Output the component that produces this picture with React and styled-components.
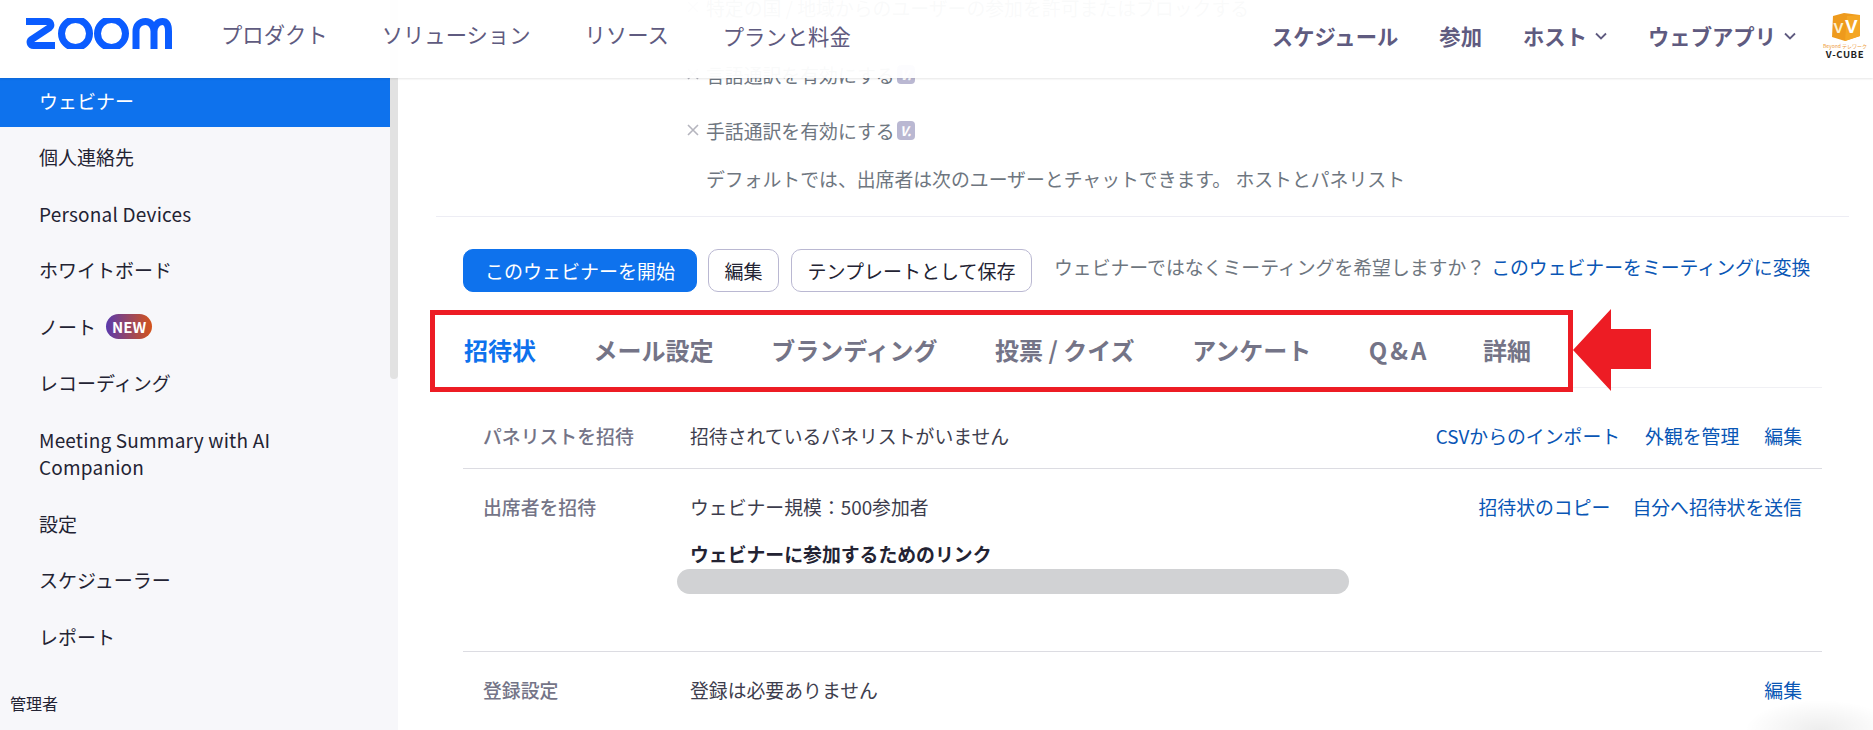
import React from "react";
import styled, { createGlobalStyle } from "styled-components";

const GlobalStyle = createGlobalStyle`
  html, body {
    margin: 0;
    padding: 0;
    background: #fff;
    font-family: "Noto Sans CJK JP", "Noto Sans", sans-serif;
  }
`;

const Page = styled.div`
  position: relative;
  display: flex;
  width: 1873px;
  height: 730px;
  overflow: hidden;
`;

/* header */
const Header = styled.header`
  position: absolute;
  top: 0;
  left: 0;
  right: 0;
  z-index: 5;
  height: 78px;
  display: flex;
  align-items: center;
  background: rgba(255, 255, 255, 0.96);
  box-shadow: 0 1px 2px rgba(0, 0, 0, 0.1);
`;

const LogoBox = styled.div`
  display: flex;
  margin-left: 25px;
  margin-top: -11px;
`;

const NavLeft = styled.nav`
  display: flex;
  align-items: flex-start;
  margin-left: 49px;
  gap: 54px;
  margin-top: -9px;
`;

const NavRight = styled.nav`
  display: flex;
  align-items: center;
  margin-left: auto;
  gap: 41px;
  margin-top: -7px;
`;

const NavItem = styled.a`
  display: flex;
  align-items: center;
  gap: 8px;
  margin-top: ${(p) => p.$nudge || 0}px;
  font-size: 21.33px;
  line-height: 30px;
  color: #5f5b80;
  font-weight: ${(p) => (p.$bold ? 700 : 400)};
`;

const CubeBox = styled.div`
  display: flex;
  flex-direction: column;
  align-items: center;
  width: 44px;
  margin: -7px 6px 0 27px;
`;

const CubeTag = styled.span`
  font-size: 5px;
  line-height: 7px;
  margin-top: 1px;
  color: #ee9a3a;
  white-space: nowrap;
`;

const CubeName = styled.span`
  font-size: 9.5px;
  line-height: 10px;
  font-weight: 700;
  letter-spacing: 0.6px;
  color: #222;
  white-space: nowrap;
`;

/* sidebar */
const Sidebar = styled.aside`
  position: relative;
  flex: none;
  box-sizing: border-box;
  width: 398px;
  height: 730px;
  padding-top: 78px;
  background: #f7f7fa;
  display: flex;
  flex-direction: column;
  gap: 7.6px;
`;

const ScrollThumb = styled.div`
  position: absolute;
  top: 0;
  right: 0;
  width: 8px;
  height: 379px;
  border-radius: 0 0 4px 4px;
  background: #e2e2e2;
`;

const SideItem = styled.a`
  display: flex;
  align-items: center;
  gap: 10px;
  width: 390px;
  box-sizing: border-box;
  padding: 8.6px 100px 13.4px 39px;
  font-size: 19px;
  line-height: 27px;
  letter-spacing: ${(p) => (p.$latin ? "0.2px" : "0")};
  color: ${(p) => (p.$active ? "#fff" : "#232333")};
  background: ${(p) => (p.$active ? "#0e72ed" : "transparent")};
`;

const NewBadge = styled.span`
  font-size: 15px;
  line-height: 25px;
  font-weight: 700;
  color: #fff;
  padding: 0 6px;
  border-radius: 13px;
  background: linear-gradient(90deg, #5a3aad, #d4531a);
`;

const SideHeading = styled.div`
  margin-top: 20px;
  padding-left: 10px;
  font-size: 16px;
  line-height: 24px;
  color: #232333;
`;

/* main */
const Main = styled.main`
  position: relative;
  flex: 1;
  min-width: 0;
  padding-left: 38px;
`;

const Notices = styled.div`
  width: 1413px;
  box-sizing: border-box;
  margin-top: -6.4px;
  padding: 0 0 24px 250px;
  border-bottom: 1px solid #ededf4;
`;

const Notice = styled.div`
  display: flex;
  align-items: center;
  gap: 6px;
  margin-bottom: ${(p) => p.$after}px;
  padding-left: ${(p) => (p.$plain ? 20 : 0)}px;
  font-size: 18.85px;
  line-height: 27px;
  color: #6e7680;
`;

const Cross = styled.svg`
  flex: none;
  width: 14px;
  height: 14px;
  stroke: #b5b5be;
  stroke-width: 1.6;
`;

const VBadge = styled.span`
  display: inline-flex;
  align-items: center;
  justify-content: center;
  width: 18px;
  height: 19px;
  margin-left: -4px;
  border-radius: 4px;
  background: #bab8d2;
  color: #fff;
  font-size: 13px;
  font-weight: 700;
  font-style: italic;
`;

const Inner = styled.div`
  width: 1359px;
  margin-left: 27px;
`;

const Toolbar = styled.div`
  display: flex;
  align-items: center;
  margin-top: 32px;
  height: 43px;
`;

const Button = styled.button`
  box-sizing: border-box;
  height: 43px;
  padding: 0;
  width: ${(p) => p.$w}px;
  margin-right: ${(p) => p.$mr}px;
  border-radius: 10px;
  border: 1px solid ${(p) => (p.$primary ? "#0e72ed" : "#bab8d2")};
  background: ${(p) => (p.$primary ? "#0e72ed" : "#fff")};
  color: ${(p) => (p.$primary ? "#fff" : "#232333")};
  font-family: inherit;
  font-size: 19px;
  white-space: nowrap;
`;

const HintLine = styled.div`
  display: flex;
  gap: 6px;
  padding-bottom: 8px;
`;

const Hint = styled.span`
  font-size: 18.85px;
  line-height: 27px;
  color: #6e7680;
  white-space: nowrap;
`;

const Link = styled.a`
  font-size: 18.85px;
  line-height: 27px;
  color: #0956b5;
  white-space: nowrap;
`;

const Tabs = styled.div`
  display: flex;
  gap: 57.6px;
  height: 75px;
  margin-top: 20px;
  padding-left: 1px;
  align-items: center;
  border-bottom: 1px solid #f0f0f4;
`;

const Tab = styled.a`
  font-size: 24px;
  line-height: 34px;
  font-weight: 700;
  white-space: nowrap;
  letter-spacing: ${(p) => p.$spacing || 0}px;
  margin-right: ${(p) => (p.$spacing ? -4 : 0)}px;
  color: ${(p) => (p.$active ? "#0e72ed" : "#747487")};
`;

const Row = styled.section`
  display: grid;
  grid-template-columns: 207px 1fr auto;
  box-sizing: border-box;
  height: ${(p) => p.$h}px;
  padding: ${(p) => p.$top}px 20px 0 20px;
  border-bottom: ${(p) => (p.$last ? "none" : "1px solid #dcdce2")};
`;

const RowLabel = styled.div`
  font-size: 18.85px;
  line-height: 27px;
  font-weight: 500;
  color: #747487;
`;

const RowValue = styled.div`
  font-size: 18.85px;
  line-height: 27px;
  color: #3d3d4d;
`;

const RowActions = styled.div`
  display: flex;
  gap: ${(p) => p.$gap || 0}px;
`;

const LinkTitle = styled.div`
  margin-top: 20px;
  font-size: 18.85px;
  line-height: 27px;
  font-weight: 700;
  color: #232333;
`;

const Redacted = styled.div`
  width: 672px;
  height: 25px;
  margin: 2px 0 0 -13px;
  border-radius: 13px;
  background: #d1d2d4;
`;

/* annotation over the tabs */
const RedBox = styled.div`
  position: absolute;
  z-index: 3;
  left: 32px;
  top: 310px;
  width: 1143px;
  height: 82px;
  box-sizing: border-box;
  border: 5px solid #ed1c24;
`;

const RedArrow = styled.svg`
  position: absolute;
  z-index: 3;
  left: 1175px;
  top: 309px;
`;

const CornerGlow = styled.div`
  position: absolute;
  right: -22px;
  bottom: -30px;
  width: 150px;
  height: 60px;
  border-radius: 50%;
  background: radial-gradient(closest-side, rgba(0, 0, 0, 0.07), rgba(0, 0, 0, 0));
`;

const ZoomLogo = () => (
  <svg width="147" height="31" viewBox="0 0 147 31" fill="none" stroke="#0b5cff" strokeWidth="7">
    <path d="M1 3.5H22.5C25.5 3.5 27 7.5 24.5 9.6L6.5 21.5C4 23.5 5 27.5 8.5 27.5H30" />
    <circle cx="50.5" cy="15.5" r="14" />
    <circle cx="86.5" cy="15.5" r="14" />
    <path d="M111 31V13.5C111 7.5 115 3.5 120.5 3.5C125.5 3.5 129 8 129 13.5V31M129 13.5C129 8 132.5 3.5 137.5 3.5C142.5 3.5 143.5 8 143.5 13.5V31" />
  </svg>
);

const CubeIcon = () => (
  <svg width="30" height="28" viewBox="0 0 30 28">
    <path d="M3 3L14 0L30 2V23L15 28L2 24Z" fill="#ee9a1c" />
    <path d="M17 3L30 2V23L15 28Z" fill="#f4a623" />
    <text x="3.5" y="20" fontFamily="Liberation Sans" fontSize="15" fontWeight="700" fill="#fdf0cf">V</text>
    <text x="15" y="20" fontFamily="Liberation Sans" fontSize="19" fontWeight="700" fill="#fff">V</text>
  </svg>
);

const Chevron = () => (
  <svg width="12" height="8" viewBox="0 0 12 8" fill="none" stroke="#5f5b80" strokeWidth="1.8">
    <path d="M1 1.5L6 6.5L11 1.5" />
  </svg>
);

const CrossIcon = () => (
  <Cross viewBox="0 0 14 14" fill="none">
    <path d="M2 2L12 12M12 2L2 12" />
  </Cross>
);

const App = () => {
  return (
    <Page>
      <GlobalStyle />
      <Header>
        <LogoBox>
          <ZoomLogo />
        </LogoBox>
        <NavLeft>
          <NavItem>プロダクト</NavItem>
          <NavItem>ソリューション</NavItem>
          <NavItem>リソース</NavItem>
          <NavItem $nudge={2}>プランと料金</NavItem>
        </NavLeft>
        <NavRight>
          <NavItem $bold>スケジュール</NavItem>
          <NavItem $bold>参加</NavItem>
          <NavItem $bold>
            ホスト
            <Chevron />
          </NavItem>
          <NavItem $bold>
            ウェブアプリ
            <Chevron />
          </NavItem>
        </NavRight>
        <CubeBox>
          <CubeIcon />
          <CubeTag>Beyond テレワーク</CubeTag>
          <CubeName>V-CUBE</CubeName>
        </CubeBox>
      </Header>

      <Sidebar>
        <ScrollThumb />
        <SideItem $active>ウェビナー</SideItem>
        <SideItem>個人連絡先</SideItem>
        <SideItem $latin>Personal Devices</SideItem>
        <SideItem>ホワイトボード</SideItem>
        <SideItem>
          ノート
          <NewBadge>NEW</NewBadge>
        </SideItem>
        <SideItem>レコーディング</SideItem>
        <SideItem $latin>Meeting Summary with AI Companion</SideItem>
        <SideItem>設定</SideItem>
        <SideItem>スケジューラー</SideItem>
        <SideItem>レポート</SideItem>
        <SideHeading>管理者</SideHeading>
      </Sidebar>

      <Main>
        <Notices>
          <Notice $after={40}>
            <CrossIcon />
            特定の国 / 地域からのユーザーの参加を許可またはブロックする
          </Notice>
          <Notice $after={29}>
            <CrossIcon />
            言語通訳を有効にする
            <VBadge>V.</VBadge>
          </Notice>
          <Notice $after={21.4}>
            <CrossIcon />
            手話通訳を有効にする
            <VBadge>V.</VBadge>
          </Notice>
          <Notice $after={0} $plain>
            デフォルトでは、出席者は次のユーザーとチャットできます。 ホストとパネリスト
          </Notice>
        </Notices>

        <Inner>
          <Toolbar>
            <Button $primary $w={234} $mr={11}>このウェビナーを開始</Button>
            <Button $w={71} $mr={12}>編集</Button>
            <Button $w={241} $mr={22}>テンプレートとして保存</Button>
            <HintLine>
              <Hint>ウェビナーではなくミーティングを希望しますか？</Hint>
              <Link>このウェビナーをミーティングに変換</Link>
            </HintLine>
          </Toolbar>

          <Tabs>
            <Tab $active>招待状</Tab>
            <Tab>メール設定</Tab>
            <Tab>ブランディング</Tab>
            <Tab>投票 / クイズ</Tab>
            <Tab>アンケート</Tab>
            <Tab $spacing={3}>Q&A</Tab>
            <Tab>詳細</Tab>
          </Tabs>

          <Row $h={81} $top={34}>
            <RowLabel>パネリストを招待</RowLabel>
            <RowValue>招待されているパネリストがいません</RowValue>
            <RowActions $gap={25}>
              <Link>CSVからのインポート</Link>
              <Link>外観を管理</Link>
              <Link>編集</Link>
            </RowActions>
          </Row>

          <Row $h={183} $top={24}>
            <RowLabel>出席者を招待</RowLabel>
            <RowValue>
              ウェビナー規模：500参加者
              <LinkTitle>ウェビナーに参加するためのリンク</LinkTitle>
              <Redacted />
            </RowValue>
            <RowActions $gap={22}>
              <Link>招待状のコピー</Link>
              <Link>自分へ招待状を送信</Link>
            </RowActions>
          </Row>

          <Row $h={78} $top={24} $last>
            <RowLabel>登録設定</RowLabel>
            <RowValue>登録は必要ありません</RowValue>
            <RowActions>
              <Link>編集</Link>
            </RowActions>
          </Row>
        </Inner>

        <RedBox />
        <RedArrow width="78" height="82" viewBox="0 0 78 82">
          <path d="M0 41L38 0V20H78V60H38V82Z" fill="#ed1c24" />
        </RedArrow>
        <CornerGlow />
      </Main>
    </Page>
  );
};

export default App;
